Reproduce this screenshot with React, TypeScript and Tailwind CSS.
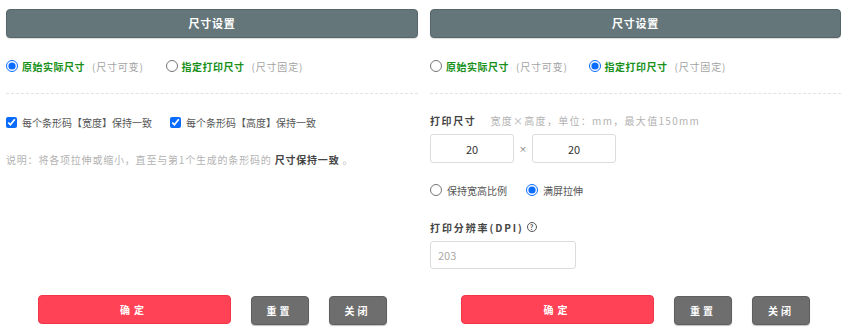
import { useState } from "react";

const FONT = { fontFamily: '"Noto Sans CJK SC", "Noto Sans", sans-serif' };

function Header() {
  return (
    <div className="flex h-[29px] items-center justify-center rounded-[4px] border border-[#56656a] bg-[#65767a] text-[11px] font-bold tracking-[0.8px] text-white shadow-[0_1px_1px_rgba(0,0,0,0.15)]">
      尺寸设置
    </div>
  );
}

function Radio({ checked, onChange }: { checked: boolean; onChange: () => void }) {
  return (
    <input
      type="radio"
      checked={checked}
      onChange={onChange}
      className="m-0 h-[12px] w-[12px] accent-[#0a6cff]"
    />
  );
}

function ModeRow({ mode, setMode, gap }: { mode: string; setMode: (m: string) => void; gap: string }) {
  return (
    <div className={`flex h-[20px] items-center text-[10px] ${gap}`}>
      <label className="flex items-center gap-[4px]">
        <Radio checked={mode === "orig"} onChange={() => setMode("orig")} />
        <span className="font-bold tracking-[0.5px] text-[#18901a]">原始实际尺寸</span>
        <span className="ml-[3px] tracking-[0.8px] text-[#a3a3a3]">(尺寸可变)</span>
      </label>
      <label className="flex items-center gap-[4px]">
        <Radio checked={mode === "fixed"} onChange={() => setMode("fixed")} />
        <span className="font-bold tracking-[0.5px] text-[#18901a]">指定打印尺寸</span>
        <span className="ml-[3px] tracking-[0.8px] text-[#a3a3a3]">(尺寸固定)</span>
      </label>
    </div>
  );
}

function Footer() {
  return (
    <div className="mt-auto mb-[9px] flex justify-center gap-[20px]">
      <button className="h-[29px] w-[193px] rounded-[4px] border border-[#f23446] bg-[#ff4256] text-[10px] font-bold tracking-[4px] text-white">
        确定
      </button>
      <button className="mt-[1px] h-[29px] w-[58px] rounded-[4px] border border-[#5e5e5e] bg-[#6e6e6e] text-[10px] font-bold tracking-[3px] text-white shadow-[0_1px_1px_rgba(0,0,0,0.25)]">
        重置
      </button>
      <button className="mt-[1px] h-[29px] w-[58px] rounded-[4px] border border-[#5e5e5e] bg-[#6e6e6e] text-[10px] font-bold tracking-[3px] text-white shadow-[0_1px_1px_rgba(0,0,0,0.25)]">
        关闭
      </button>
    </div>
  );
}

function LeftPanel() {
  const [mode, setMode] = useState("orig");
  const [w, setW] = useState(true);
  const [h, setH] = useState(true);
  return (
    <div className="flex h-[334px] w-[412px] flex-col pt-[9px]">
      <Header />
      <div className="mt-[18px]">
        <ModeRow mode={mode} setMode={setMode} gap="gap-[22px]" />
      </div>
      <div className="mt-[17px] border-t border-dashed border-[#e2e2e2]" />
      <div className="mt-[18px] flex h-[20px] items-center gap-[18px] text-[10px] text-[#555]">
        <label className="flex items-center gap-[5px]">
          <input type="checkbox" checked={w} onChange={() => setW(!w)} className="m-0 h-[11px] w-[11px] accent-[#0a6cff]" />
          <span>每个条形码【宽度】保持一致</span>
        </label>
        <label className="flex items-center gap-[5px]">
          <input type="checkbox" checked={h} onChange={() => setH(!h)} className="m-0 h-[11px] w-[11px] accent-[#0a6cff]" />
          <span>每个条形码【高度】保持一致</span>
        </label>
      </div>
      <p className="mt-[20px] h-[16px] text-[10px] leading-[16px] tracking-[0.8px] text-[#b3b3b3]">
        说明：将各项拉伸或缩小，直至与第1个生成的条形码的
        <span className="font-bold text-[#444]"> 尺寸保持一致 </span>。
      </p>
      <Footer />
    </div>
  );
}

function RightPanel() {
  const [mode, setMode] = useState("fixed");
  const [fit, setFit] = useState("stretch");
  const [pw, setPw] = useState("20");
  const [ph, setPh] = useState("20");
  return (
    <div className="flex h-[334px] w-[411px] flex-col pt-[9px]">
      <Header />
      <div className="mt-[18px]">
        <ModeRow mode={mode} setMode={setMode} gap="gap-[21px]" />
      </div>
      <div className="mt-[17px] border-t border-dashed border-[#e2e2e2]" />
      <div className="mt-[18px] flex h-[16px] items-center text-[10px]">
        <span className="font-bold tracking-[1.6px] text-[#444]">打印尺寸</span>
        <span className="ml-[14px] tracking-[1.3px] text-[#b3b3b3]">宽度×高度，单位：mm，最大值150mm</span>
      </div>
      <div className="mt-[6px] flex items-center">
        <input
          value={pw}
          onChange={(e) => setPw(e.target.value)}
          className="h-[29px] w-[84px] rounded-[3px] border border-[#dcdcdc] text-center text-[11px] text-[#333] outline-none"
        />
        <span className="w-[18px] text-center text-[8px] text-[#666]">×</span>
        <input
          value={ph}
          onChange={(e) => setPh(e.target.value)}
          className="h-[29px] w-[84px] rounded-[3px] border border-[#dcdcdc] text-center text-[11px] text-[#333] outline-none"
        />
      </div>
      <div className="mt-[19px] flex h-[16px] items-center gap-[19px] text-[10px] text-[#555]">
        <label className="flex items-center gap-[5px]">
          <Radio checked={fit === "keep"} onChange={() => setFit("keep")} />
          <span>保持宽高比例</span>
        </label>
        <label className="flex items-center gap-[5px]">
          <Radio checked={fit === "stretch"} onChange={() => setFit("stretch")} />
          <span>满屏拉伸</span>
        </label>
      </div>
      <div className="mt-[21px] flex h-[16px] items-center text-[10px]">
        <span className="font-bold tracking-[1.9px] text-[#444]">打印分辨率(DPI)</span>
        <span className="ml-[3px] flex h-[10px] w-[10px] items-center justify-center rounded-full border border-[#555] text-[7px] font-bold leading-none text-[#555]">
          ?
        </span>
      </div>
      <input
        placeholder="203"
        className="mt-[6px] h-[28px] w-[146px] rounded-[3px] border border-[#dcdcdc] px-[7px] text-[11px] text-[#333] outline-none placeholder:text-[#aaa]"
      />
      <Footer />
    </div>
  );
}

export default function App() {
  return (
    <div style={FONT} className="flex h-[334px] w-[850px] gap-[12px] bg-white pl-[6px]">
      <LeftPanel />
      <RightPanel />
    </div>
  );
}
